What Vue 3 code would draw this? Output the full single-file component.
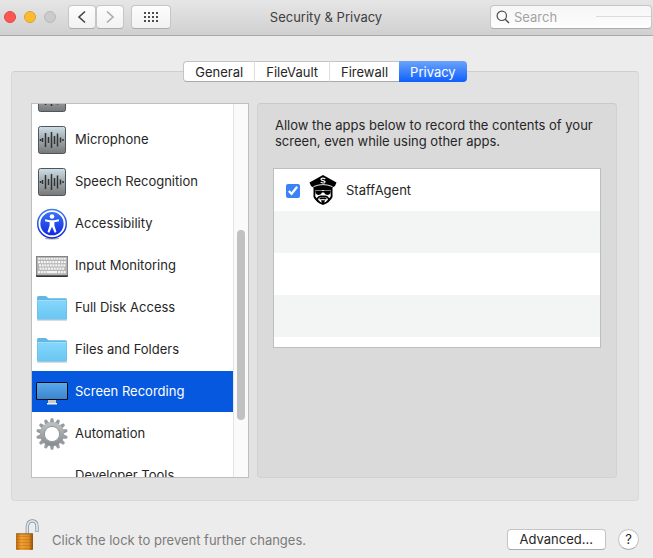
<script setup>
    import { ref } from 'vue';

    const tabs = ['General', 'FileVault', 'Firewall', 'Privacy'];
    const activeTab = ref('Privacy');

    const services = [
        { name: '', icon: 'wave' },
        { name: 'Microphone', icon: 'wave' },
        { name: 'Speech Recognition', icon: 'wave' },
        { name: 'Accessibility', icon: 'access' },
        { name: 'Input Monitoring', icon: 'keyboard' },
        { name: 'Full Disk Access', icon: 'folder' },
        { name: 'Files and Folders', icon: 'folder' },
        { name: 'Screen Recording', icon: 'screen' },
        { name: 'Automation', icon: 'gear' },
        { name: 'Developer Tools', icon: '' },
    ];
    const activeService = ref('Screen Recording');

    const search = ref('');
    const allowed = ref(true);
</script>

<template>
    <div class="window">
        <header class="titlebar">
            <div class="controls">
                <div class="lights">
                    <button class="light red" aria-label="Close"></button>
                    <button class="light yellow" aria-label="Minimize"></button>
                    <button class="light" aria-label="Zoom" disabled></button>
                </div>
                <div class="arrows">
                    <button class="tool" aria-label="Back">
                        <svg width="10" height="14" viewBox="0 0 10 14"><path d="M8 1.5 L2 7 L8 12.5" fill="none" stroke="#444" stroke-width="1.6" /></svg>
                    </button>
                    <button class="tool" aria-label="Forward">
                        <svg width="10" height="14" viewBox="0 0 10 14"><path d="M2 1.5 L8 7 L2 12.5" fill="none" stroke="#aaa" stroke-width="1.6" /></svg>
                    </button>
                </div>
                <button class="tool wide" aria-label="Show All">
                    <svg width="14" height="10" viewBox="0 0 14 10" fill="#4c4c4c">
                        <template v-for="y in 3" :key="y">
                            <rect v-for="x in 4" :key="x" :x="(x - 1) * 4" :y="(y - 1) * 4" width="2" height="2" />
                        </template>
                    </svg>
                </button>
            </div>
            <h1 class="title">Security &amp; Privacy</h1>
            <label class="search">
                <svg width="14" height="14" viewBox="0 0 14 14" fill="none" stroke="#505050" stroke-width="1.2">
                    <circle cx="5.8" cy="5.8" r="4.7" />
                    <path d="M9.2 9.2 L13 13" stroke-width="1.5" />
                </svg>
                <input v-model="search" type="text" placeholder="Search" aria-label="Search">
                <span class="search-line"></span>
            </label>
        </header>

        <main class="content">
            <nav class="tabs">
                <button v-for="tab in tabs" :key="tab" class="tab" :class="{ active: tab === activeTab }" @click="activeTab = tab">{{ tab }}</button>
            </nav>

            <section class="panel">
                <div class="services">
                    <ul class="service-list">
                        <li v-for="(service, index) in services" :key="index">
                            <button class="service" :class="{ selected: service.name === activeService }" @click="activeService = service.name">
                                <svg v-if="service.icon === 'wave'" class="icon" viewBox="0 0 32 32">
                                    <defs>
                                        <linearGradient id="wave-bg" x1="0" y1="0" x2="0" y2="1">
                                            <stop offset="0" stop-color="#cddfe8" />
                                            <stop offset=".5" stop-color="#a0a8ab" />
                                            <stop offset="1" stop-color="#777" />
                                        </linearGradient>
                                    </defs>
                                    <rect x="2.5" y="2.5" width="27" height="27" rx="2" fill="url(#wave-bg)" stroke="#4b565e" />
                                    <path d="M4.5 15v2 M6.5 14v4 M9.5 9v14 M12.5 13v6 M15.5 8v16 M18.5 12v8 M21.5 9.5v13 M24.5 13.5v5 M27 15v2" stroke="#303335" stroke-width="1.5" />
                                </svg>
                                <svg v-else-if="service.icon === 'access'" class="icon" viewBox="0 0 32 32">
                                    <defs>
                                        <linearGradient id="access-bg" x1="0" y1="0" x2="0" y2="1">
                                            <stop offset="0" stop-color="#3f7df6" />
                                            <stop offset="1" stop-color="#0a1ee0" />
                                        </linearGradient>
                                    </defs>
                                    <ellipse cx="16" cy="30.5" rx="7" ry="1" fill="#aaa" />
                                    <circle cx="16" cy="15.7" r="15" fill="url(#access-bg)" />
                                    <circle cx="16" cy="15.7" r="12.6" fill="none" stroke="#fff" stroke-width="1.9" />
                                    <circle cx="16" cy="8.5" r="2.3" fill="#fff" />
                                    <path d="M9 11.3 L14 12.2 H18 L23 11.3 V13.2 L18.4 14.3 V17.5 L20.5 24 L18.7 24.7 L16 18.8 L13.3 24.7 L11.5 24 L13.6 17.5 V14.3 L9 13.2Z" fill="#fff" />
                                </svg>
                                <svg v-else-if="service.icon === 'keyboard'" class="icon" viewBox="0 0 32 32">
                                    <rect x="0" y="6" width="32" height="21" rx="1" fill="#333" />
                                    <rect x="0" y="6" width="32" height="19.5" rx="1" fill="#858585" />
                                    <rect x="1" y="7" width="30" height="18" fill="#b5b5b5" />
                                    <g fill="#f4f4f4">
                                        <rect v-for="x in 11" :key="x" :x="2 + (x - 1) * 2.6" y="8" width="2" height="1.6" />
                                        <rect v-for="x in 10" :key="x" :x="2 + (x - 1) * 2.85" y="11" width="2.1" height="2.2" />
                                        <rect v-for="x in 10" :key="x" :x="3 + (x - 1) * 2.7" y="14.3" width="2" height="2.2" />
                                        <rect v-for="x in 9" :key="x" :x="3.4 + (x - 1) * 2.85" y="17.6" width="2.1" height="2.2" />
                                        <rect v-for="x in 3" :key="x" :x="2 + (x - 1) * 2.8" y="21" width="2.1" height="2.2" />
                                        <rect x="10.5" y="21" width="10.5" height="2.2" />
                                        <rect v-for="x in 3" :key="x" :x="22 + (x - 1) * 2.8" y="21" width="2.1" height="2.2" />
                                    </g>
                                </svg>
                                <svg v-else-if="service.icon === 'folder'" class="icon" viewBox="0 0 32 32">
                                    <defs>
                                        <linearGradient id="folder-bg" x1="0" y1="0" x2="0" y2="1">
                                            <stop offset="0" stop-color="#85d6fb" />
                                            <stop offset="1" stop-color="#69c6f3" />
                                        </linearGradient>
                                    </defs>
                                    <path d="M1 28h30" stroke="#aeb9bf" />
                                    <path d="M1 5.5 Q1 4 2.5 4 H9 Q10.5 4 11.3 5.2 Q12 6.2 13.5 6.2 H29.5 Q31 6.2 31 7.7 V26 Q31 27.5 29.5 27.5 H2.5 Q1 27.5 1 26Z" fill="#62b8e2" />
                                    <path d="M1.5 8.5 H30.5 V26 Q30.5 27 29.5 27 H2.5 Q1.5 27 1.5 26Z" fill="url(#folder-bg)" />
                                    <path d="M1.5 8.5 H30.5" stroke="#a9e3fc" stroke-width=".8" />
                                </svg>
                                <svg v-else-if="service.icon === 'screen'" class="icon" viewBox="0 0 32 32">
                                    <defs>
                                        <linearGradient id="screen-bg" x1="0" y1="0" x2="0" y2="1">
                                            <stop offset="0" stop-color="#5ba8ec" />
                                            <stop offset="1" stop-color="#3986d0" />
                                        </linearGradient>
                                    </defs>
                                    <path d="M12 24h8v3.5H12z" fill="#c8c8c8" />
                                    <path d="M11 27h10v1.5H11z" fill="#f0f0f0" />
                                    <rect x="0" y="6" width="32" height="18" rx="1.5" fill="#080d14" />
                                    <rect x="1" y="7" width="30" height="16" fill="url(#screen-bg)" />
                                </svg>
                                <svg v-else-if="service.icon === 'gear'" class="icon" viewBox="0 0 32 32">
                                    <defs>
                                        <linearGradient id="gear-bg" x1="0" y1="0" x2="0" y2="1">
                                            <stop offset="0" stop-color="#b9bec1" />
                                            <stop offset="1" stop-color="#8b8f92" />
                                        </linearGradient>
                                    </defs>
                                    <path v-for="tooth in 14" :key="tooth" d="M13.6 5.5 L14.8 .3 H17.2 L18.4 5.5Z" fill="#989c9f" :transform="`rotate(${(tooth - 1) * 360 / 14} 16 16)`" />
                                    <circle cx="16" cy="16" r="9.9" fill="none" stroke="url(#gear-bg)" stroke-width="4.4" />
                                    <circle cx="16" cy="16" r="7.6" fill="#fff" stroke="#858a8d" stroke-width=".9" />
                                </svg>
                                <span v-else class="icon"></span>
                                <span class="service-name">{{ service.name }}</span>
                            </button>
                        </li>
                    </ul>
                    <div class="track"><div class="thumb"></div></div>
                </div>

                <div class="detail">
                    <p class="hint">Allow the apps below to record the contents of your screen, even while using other apps.</p>
                    <div class="apps">
                        <label class="app">
                            <input v-model="allowed" type="checkbox">
                            <svg width="28" height="30" viewBox="0 0 28 30">
                                <path d="M14 0 L27.5 7.5 L26 11 L23.5 12.5 V22 Q21.5 27 14 30 Q6.5 27 4.5 22 V12.5 L2 11 L.5 7.5Z" fill="#000" />
                                <path d="M4.5 11.6 Q14 7.6 23.5 11.6" fill="none" stroke="#fff" stroke-width=".9" />
                                <path d="M6.3 15 H21.7 V21.5 L20.3 23.3 Q19 20.8 16.5 20.6 H11.5 Q9 20.8 7.7 23.3 L6.3 21.5Z" fill="#fff" />
                                <path d="M6.3 15.6 H12.9 L14 16.2 L15.1 15.6 H21.7 V17 Q21 20 18.3 20 Q15.8 20 15 17.6 H13 Q12.2 20 9.7 20 Q7 20 6.3 17Z" fill="#000" />
                                <path d="M9 24.4 Q10 22 14 22 Q18 22 19 24.4 Q17.5 27 14 27.8 Q10.5 27 9 24.4Z" fill="#fff" />
                                <path d="M10 23.9 Q12 21.6 14 22.6 Q16 21.6 18 23.9 Q16 24.5 14 23.9 Q12 24.5 10 23.9Z M12 25.3 H16 L15 28 H13Z" fill="#000" />
                                <path d="M16.3 3.8 Q14 2.5 12.3 3.6 Q11.3 5 14 5.6 Q17 6.3 15.6 7.7 Q13.8 8.5 11.7 7.3" fill="none" stroke="#fff" stroke-width="1.2" />
                            </svg>
                            <span class="app-name">StaffAgent</span>
                        </label>
                    </div>
                </div>
            </section>

            <footer class="footer">
                <button class="lock" aria-label="Lock">
                    <svg width="24" height="32" viewBox="0 0 24 32">
                        <defs>
                            <linearGradient id="lock-bg" x1="0" y1="0" x2="1" y2="0">
                                <stop offset="0" stop-color="#b8660f" />
                                <stop offset=".3" stop-color="#f0a034" />
                                <stop offset=".75" stop-color="#e08c22" />
                                <stop offset="1" stop-color="#8d4c0c" />
                            </linearGradient>
                        </defs>
                        <path d="M12.3 15 V7.5 Q12.8 1.8 17.3 1.8 Q22 1.8 22 7.5 V13" fill="none" stroke="#7e8d98" stroke-width="3.2" />
                        <path d="M12.3 15 V7.5 Q12.8 1.8 17.3 1.8 Q22 1.8 22 7.5 V12.6" fill="none" stroke="#dde5ea" stroke-width="1.8" />
                        <rect x="1" y="14.5" width="17" height="16.5" rx="1" fill="url(#lock-bg)" />
                        <path d="M1 17.5h17M1 20.5h17M1 23.5h17M1 26.5h17M1 29.5h17" stroke="#a95f10" stroke-width=".8" opacity=".4" />
                        <path d="M1 14.8h17" stroke="#7a5420" stroke-width=".8" />
                    </svg>
                </button>
                <span class="lock-text">Click the lock to prevent further changes.</span>
                <button class="advanced">Advanced...</button>
                <button class="help" aria-label="Help">?</button>
            </footer>
        </main>
    </div>
</template>

<style>
    body{
        margin: 0;
        background-color: #ececec;
        overflow: hidden;
    }
</style>

<style scoped>
    *{
        box-sizing: border-box;
    }
    .window{
        font-family: Inter, "Liberation Sans", sans-serif;
        font-size: 13px;
        line-height: 16px;
        color: #262626;
    }
    button, input{
        font: inherit;
        color: inherit;
        margin: 0;
        padding: 0;
        border: none;
    }
    svg{
        display: block;
        flex: none;
    }
    .titlebar{
        display: grid;
        grid-template-columns: 1fr auto 1fr;
        align-items: center;
        height: 36px;
        padding: 0 1px 2px 4px;
        border-bottom: 1px solid #a9a9a9;
        background: linear-gradient(#e6e6e6, #d0d0d0);
    }
    .controls, .lights, .arrows{
        display: flex;
        align-items: center;
    }
    .lights{
        gap: 8px;
        margin-right: 12px;
    }
    .light{
        width: 12px;
        height: 12px;
        border-radius: 50%;
        border: 1px solid #b9b9b9;
        background-color: #cbcbcb;
    }
    .red{
        background-color: #fc5753;
        border-color: #df4744;
    }
    .yellow{
        background-color: #fdbc2e;
        border-color: #dea032;
    }
    .arrows{
        margin-right: 7px;
    }
    .tool{
        display: flex;
        align-items: center;
        justify-content: center;
        width: 28px;
        height: 24px;
        border: 1px solid #c6c6c6;
        border-bottom-color: #acacac;
        border-radius: 4px;
        background: linear-gradient(#fdfdfd, #f2f2f2);
    }
    .wide{
        width: 40px;
    }
    .title{
        margin: 0;
        padding-right: 4px;
        font-size: 13px;
        font-weight: 400;
        color: #404040;
    }
    .search{
        display: flex;
        align-items: center;
        justify-self: end;
        width: 162px;
        height: 24px;
        padding-left: 5px;
        border: 1px solid #c6c6c6;
        border-bottom-color: #acacac;
        border-radius: 4px;
        background: linear-gradient(#f6f6f6, #fdfdfd);
    }
    .search input{
        flex: 1;
        min-width: 0;
        margin-left: 4px;
        background: none;
        outline: none;
    }
    .search input::placeholder{
        color: #a3a3a3;
        opacity: 1;
    }
    .search-line{
        width: 55px;
        height: 1px;
        background-color: #dcdcdc;
    }
    .content{
        padding: 25px 14px 0 11px;
    }
    .tabs{
        position: relative;
        display: flex;
        justify-content: center;
        margin-bottom: -11px;
    }
    .tab{
        height: 21px;
        padding: 0 11px;
        border: 1px solid #c4c4c4;
        border-right: none;
        border-bottom-color: #aaa;
        background-color: #fff;
    }
    .tab + .tab{
        border-left-color: #dedede;
    }
    .tab:first-of-type{
        border-radius: 4px 0 0 4px;
    }
    .tab:last-of-type{
        border-radius: 0 4px 4px 0;
    }
    .tab.active{
        border: none;
        background: linear-gradient(#6aa4fb, #0f5ffd);
        color: #fff;
    }
    .panel{
        display: grid;
        grid-template-columns: 218px 1fr;
        gap: 8px;
        padding: 31px 21px 22px 19px;
        border: 1px solid #d8d8d8;
        border-top-color: #cfcfcf;
        border-radius: 4px;
        background-color: #e2e2e2;
    }
    .services{
        display: flex;
        height: 375px;
        border: 1px solid #bebebe;
        background-color: #fff;
        overflow: hidden;
    }
    .service-list{
        flex: 1;
        margin: -27px 0 0;
        padding: 0;
        list-style: none;
    }
    .service-list li{
        height: 42px;
    }
    .service{
        display: flex;
        align-items: center;
        gap: 7px;
        width: 100%;
        height: 41px;
        padding: 0 4px;
        background: none;
        text-align: left;
    }
    .service.selected{
        background-color: #0659df;
        color: #fff;
    }
    .icon{
        flex: none;
        width: 32px;
        height: 32px;
    }
    .service-name{
        padding-bottom: 2px;
    }
    .track{
        width: 15px;
        padding: 126px 3px 0;
        border-left: 1px solid #e4e4e4;
        background-color: #fafafa;
    }
    .thumb{
        height: 190px;
        border-radius: 4px;
        background-color: #c1c1c1;
    }
    .detail{
        padding: 13px 15px 0;
        border: 1px solid #d2d2d2;
        border-top-color: #c9c9c9;
        border-radius: 4px;
        background-color: #dadada;
    }
    .hint{
        margin: 0 2px 19px;
    }
    .apps{
        height: 180px;
        border: 1px solid #bebebe;
        background: repeating-linear-gradient(#fff 0 42px, #f3f5f5 42px 84px);
    }
    .app{
        display: flex;
        align-items: center;
        height: 42px;
        padding-left: 12px;
    }
    .app input{
        width: 14px;
        height: 14px;
        margin: 2px 9px 0 0;
        accent-color: #3b82f7;
    }
    .app-name{
        margin-left: 9px;
    }
    .footer{
        display: flex;
        align-items: center;
        padding: 18px 0 4px 4px;
    }
    .lock{
        margin-right: 13px;
        background: none;
    }
    .lock-text{
        padding-top: 10px;
        color: #7b7b7b;
    }
    .advanced{
        height: 21px;
        margin: 8px 12px 0 auto;
        padding: 0 12px;
        border: 1px solid #c4c4c4;
        border-bottom-color: #aaa;
        border-radius: 4px;
        background-color: #fff;
    }
    .help{
        width: 21px;
        height: 21px;
        margin-top: 8px;
        border: 1px solid #c4c4c4;
        border-bottom-color: #aaa;
        border-radius: 50%;
        background-color: #fff;
    }
</style>
